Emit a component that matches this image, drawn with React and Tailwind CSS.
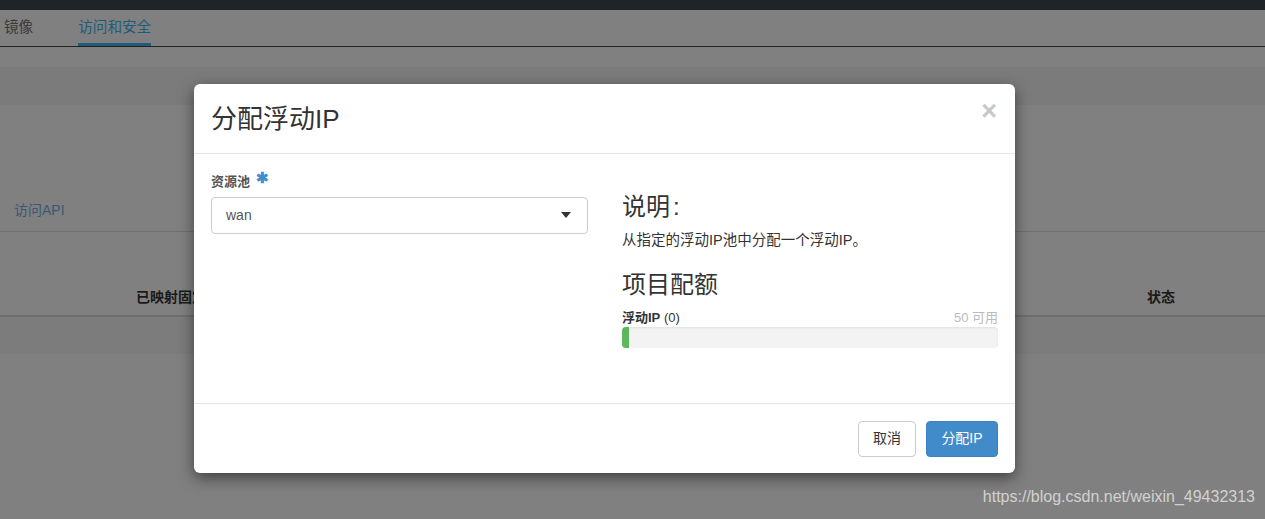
import React from "react";

const font = { fontFamily: '"Liberation Sans", "Noto Sans CJK SC", sans-serif' };

const Caret = () => (
  <svg width="10" height="6" viewBox="0 0 10 6" className="text-[#333]">
    <path d="M0 0h10L5 6z" fill="currentColor" />
  </svg>
);

const Background = () => (
  <div className="absolute inset-0 bg-[#808080]">
    <div className="h-[10px] bg-[#202328]" />
    {/* tabs */}
    <div className="flex h-[37px] items-stretch border-b border-[#222] text-[14.6px]">
      <div className="flex items-center pl-[4px] pr-[45px] text-[#3a3a3a]">镜像</div>
      <div className="flex items-center border-b-[3px] border-[#1f5b7b] pt-[3px] text-[#1f5b7b]">访问和安全</div>
    </div>
    <div className="h-[20px]" />
    <div className="h-[38px] bg-[#7b7b7b]" />
    <div className="flex h-[127px] items-end border-b border-[#6f6f6f] pb-[10px] pl-[14px] text-[14px] text-[#3d5872]">
      访问API
    </div>
    <div className="flex h-[85px] items-end border-b-2 border-[#6e6e6e] pb-[7px] text-[14px] font-bold text-[#1a1a1a]">
      <div className="pl-[136px]">已映射固定IP地址</div>
      <div className="ml-auto pr-[90px]">状态</div>
    </div>
    <div className="h-[37px] bg-[#7c7c7c]" />
  </div>
);

export default function App() {
  return (
    <div className="relative h-[519px] w-[1265px] overflow-hidden" style={font}>
      <Background />
      <div className="absolute left-[194px] top-[84px] w-[821px] rounded-[6px] bg-white shadow-[0_5px_15px_rgba(0,0,0,0.5)]">
        {/* header */}
        <div className="flex h-[70px] items-center border-b border-[#e5e5e5] px-[17px]">
          <h4 className="text-[26px] leading-none text-[#333]">分配浮动IP</h4>
          <span className="ml-auto mb-[14px] mr-[1px] text-[27px] font-bold leading-none text-[#c8c8c8]">×</span>
        </div>
        {/* body */}
        <div className="flex h-[249px] px-[17px] pt-[17px]">
          <div className="w-[377px]">
            <div className="flex items-start text-[13px] font-bold text-[#555]">
              <span className="pt-[1px]">资源池</span>
              <span className="ml-[6px] mt-[-1px] text-[15px] leading-none text-[#3e8ece]">✱</span>
            </div>
            <div className="mt-[5px] flex h-[37px] items-center rounded-[4px] border border-[#ccc] pl-[14px] pr-[16px] text-[14px] text-[#555]">
              wan
              <span className="ml-auto"><Caret /></span>
            </div>
          </div>
          <div className="ml-[34px] w-[376px] pt-[21px] text-[#333]">
            <h3 className="text-[24px] leading-[30px]">说明<span className="ml-[3px]">:</span></h3>
            <p className="mt-[9px] text-[14.5px] leading-[18px]">从指定的浮动IP池中分配一个浮动IP。</p>
            <h3 className="mt-[21px] text-[24px] leading-[30px]">项目配额</h3>
            <div className="mt-[10px] flex text-[13px] leading-[16px]">
              <span><b>浮动IP</b> (0)</span>
              <span className="ml-auto text-[#bbb]">50 可用</span>
            </div>
            <div className="mt-[1px] h-[21px] overflow-hidden rounded-[4px] bg-[#f3f3f3] shadow-[inset_0_1px_2px_rgba(0,0,0,0.08)]">
              <div className="h-full w-[7px] bg-[#5cb85c]" />
            </div>
          </div>
        </div>
        {/* footer */}
        <div className="flex h-[70px] items-center justify-end gap-[10px] border-t border-[#e5e5e5] px-[17px]">
          <button className="h-[36px] w-[58px] rounded-[4px] border border-[#ccc] bg-white text-[14px] text-[#333]">取消</button>
          <button className="h-[36px] w-[72px] rounded-[4px] border border-[#3a82c4] bg-[#428bca] text-[14px] text-white">分配IP</button>
        </div>
      </div>
      <div className="absolute bottom-[10px] right-[10px] text-[16px] text-[#d2d2d2]">https://blog.csdn.net/weixin_49432313</div>
    </div>
  );
}
